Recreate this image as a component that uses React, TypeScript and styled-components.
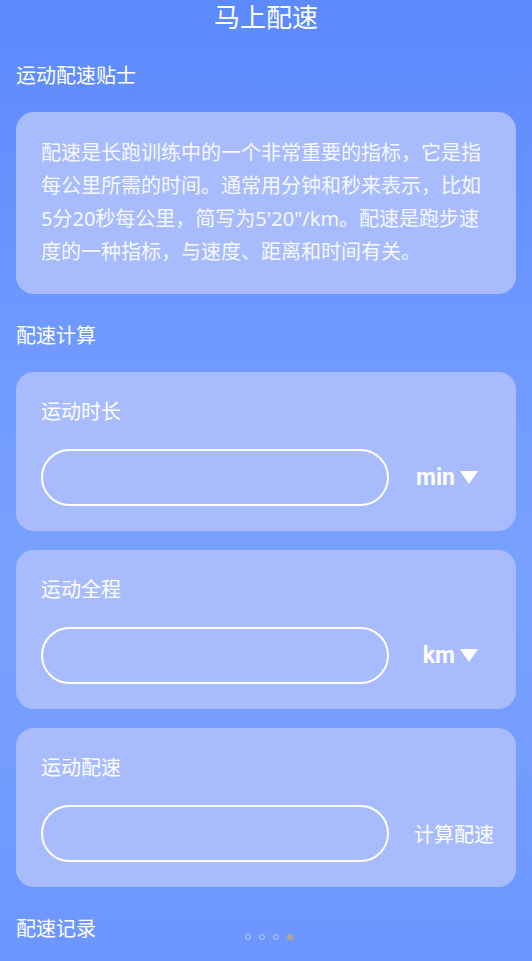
import React from 'react';
import styled, { createGlobalStyle } from 'styled-components';

const GlobalStyle = createGlobalStyle`
  html, body {
    margin: 0;
    padding: 0;
  }
  body {
    font-family: "Noto Sans", "Noto Sans CJK SC", sans-serif;
    color: #fff;
  }
`;

type CalcField = {
  label: string;
  unit?: string;
  action?: string;
};

const fields: CalcField[] = [
  { label: '运动时长', unit: 'min' },
  { label: '运动全程', unit: 'km' },
  { label: '运动配速', action: '计算配速' },
];

// wrapped the same way as on the device
const tipLines = [
  '配速是长跑训练中的一个非常重要的指标，它是指',
  '每公里所需的时间。通常用分钟和秒来表示，比如',
  '5分20秒每公里，简写为5\'20"/km。配速是跑步速',
  '度的一种指标，与速度、距离和时间有关。',
];

const App: React.FC = () => {
  return (
    <>
      <GlobalStyle />
      <Page>
        <Title>马上配速</Title>

        <SectionTitle>运动配速贴士</SectionTitle>
        <TipCard>
          {tipLines.map((line) => (
            <TipLine key={line}>{line}</TipLine>
          ))}
        </TipCard>

        <SectionTitle>配速计算</SectionTitle>
        <CardList>
          {fields.map((f) => (
            <CalcCard key={f.label}>
              <FieldLabel>{f.label}</FieldLabel>
              <FieldRow>
                <PillInput />
                {f.unit ? (
                  <UnitPicker>
                    {f.unit}
                    <Caret viewBox="0 0 18 13">
                      <path d="M0 0 H18 L9 13 Z" fill="#fff" />
                    </Caret>
                  </UnitPicker>
                ) : (
                  <ActionText>{f.action}</ActionText>
                )}
              </FieldRow>
            </CalcCard>
          ))}
        </CardList>

        <Footer>
          <SectionTitle>配速记录</SectionTitle>
          <Dots>
            <Dot />
            <Dot />
            <Dot />
            <Dot $active />
          </Dots>
        </Footer>
      </Page>
    </>
  );
};

const Page = styled.div`
  width: 532px;
  height: 961px;
  overflow: hidden;
  box-sizing: border-box;
  padding: 0 16px;
  background: linear-gradient(180deg, #5c89fc 0%, #6f99ff 35%, #78a1ff 60%, #729bff 85%, #6c96fe 100%);
`;

const Title = styled.h1`
  margin: 0;
  padding-top: 3px;
  height: 31px;
  line-height: 28px;
  font-size: 26px;
  font-weight: 400;
  text-align: center;
`;

const SectionTitle = styled.div`
  font-size: 20px;
  line-height: 28px;
  padding: 28px 0 22px;
`;

const TipCard = styled.div`
  background: #a8bcfd;
  border-radius: 18px;
  padding: 24px 25px 26px;
  font-size: 20px;
  line-height: 33px;
  color: #f6f8ff;
`;

const TipLine = styled.div`
  white-space: nowrap;
`;

const CardList = styled.div`
  display: flex;
  flex-direction: column;
  gap: 19px;
`;

const CalcCard = styled.div`
  background: #a8bcfd;
  border-radius: 18px;
  padding: 26px 25px 25px;
  display: flex;
  flex-direction: column;
  gap: 23px;
`;

const FieldLabel = styled.div`
  font-size: 20px;
  line-height: 28px;
`;

const FieldRow = styled.div`
  display: flex;
  align-items: center;
`;

const PillInput = styled.div`
  width: 348px;
  height: 57px;
  box-sizing: border-box;
  border: 2px solid #fff;
  border-radius: 29px;
  flex-shrink: 0;
`;

const UnitPicker = styled.div`
  flex: 1;
  display: flex;
  align-items: center;
  justify-content: flex-end;
  padding-right: 13px;
  gap: 5px;
  font-family: Roboto, "Noto Sans", sans-serif;
  font-weight: 700;
  font-size: 23px;
`;

const Caret = styled.svg`
  width: 18px;
  height: 13px;
`;

const ActionText = styled.div`
  flex: 1;
  text-align: right;
  margin-right: -3px;
  font-size: 20px;
`;

const Footer = styled.div`
  position: relative;
`;

const Dots = styled.div`
  position: absolute;
  left: 229px;
  top: 47px;
  display: flex;
  gap: 8px;
`;

const Dot = styled.span<{ $active?: boolean }>`
  width: 6px;
  height: 6px;
  border-radius: 50%;
  box-sizing: border-box;
  border: ${(p) => (p.$active ? 'none' : '1.5px solid rgba(255,255,255,0.5)')};
  background: ${(p) => (p.$active ? '#b7a58c' : 'transparent')};
`;

export default App;
